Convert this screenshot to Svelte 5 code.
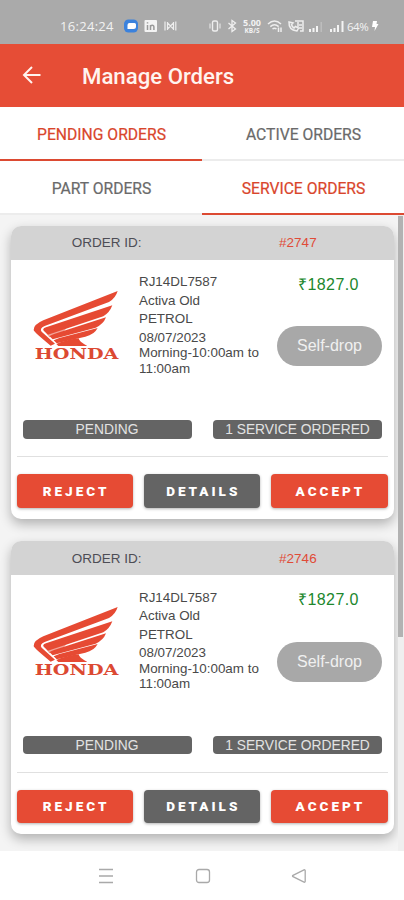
<script>
  let mainTab = $state('PENDING ORDERS');
  let subTab = $state('SERVICE ORDERS');

  const mainTabs = ['PENDING ORDERS', 'ACTIVE ORDERS'];
  const subTabs = ['PART ORDERS', 'SERVICE ORDERS'];

  const orders = [
    {
      id: 2747,
      details: ['RJ14DL7587', 'Activa Old', 'PETROL'],
      date: '08/07/2023',
      slot: 'Morning-10:00am to 11:00am',
      price: '₹1827.0',
      pickup: 'Self-drop',
      status: 'PENDING',
      services: '1 SERVICE ORDERED'
    },
    {
      id: 2746,
      details: ['RJ14DL7587', 'Activa Old', 'PETROL'],
      date: '08/07/2023',
      slot: 'Morning-10:00am to 11:00am',
      price: '₹1827.0',
      pickup: 'Self-drop',
      status: 'PENDING',
      services: '1 SERVICE ORDERED'
    }
  ];
</script>

{#snippet tabs(items, active, onSelect)}
  <div class="tabs">
    {#each items as item}
      <button class="tab" class:active={item === active} onclick={() => onSelect(item)}>{item}</button>
    {/each}
  </div>
{/snippet}

<div class="phone">
  <div class="status-bar">
    <span class="clock">16:24:24</span>
    <svg class="app-icons" width="54" height="16" viewBox="0 0 54 16">
      <rect x="0" y="1.5" width="14" height="13" rx="4.5" fill="#3b82dd" />
      <path d="M5.500 5h5a1.500 1.500 0 0 1 1.500 1.500V8.500a2.500 2.500 0 0 1-2.500 2.500H3.500V7a2 2 0 0 1 2-2z" fill="#fff" />
      <rect x="20.500" y="2" width="12.500" height="12" rx="1" fill="#f3f3f3" />
      <path d="M23.500 7v5M23.500 4.200v1.300M26.500 12V7M26.500 9q0-1.700 1.700-1.700T29.900 9v3" stroke="#999" stroke-width="1.500" fill="none" />
      <path d="M41 3.500v9M43.500 4v8M43.500 5l3 3 3-3M43.500 11l3-3 3 3M49.500 4v8M51.800 3.500v9" stroke="#eee" stroke-width="1.200" fill="none" />
    </svg>

    <!-- vibrate, bluetooth -->
    <svg class="signals" width="30" height="16" viewBox="0 0 30 16">
      <rect x="3.500" y="3" width="5" height="10" rx="1.500" fill="none" stroke="#eee" stroke-width="1.400" />
      <path d="M1 5.500v5M11 5.500v5" stroke="#eee" />
      <path d="M19.500 5l7 6-3.500 2.500v-11L26.500 5l-7 6" stroke="#eee" stroke-width="1.300" fill="none" />
    </svg>
    <span class="speed"><b>5.00</b><small>KB/S</small></span>

    <!-- wifi, volte, two sims -->
    <svg class="network" width="80" height="16" viewBox="0 0 80 16">
      <g fill="none" stroke="#eee" stroke-width="1.500">
        <path d="M1 6Q7.500 0 14 6M3.300 8.600Q7.500 5 11.700 8.600M5.500 11Q7.500 9.500 9.500 11" />
        <path d="M11.500 9.500v4.500M14 14V9.500" />
        <path d="M22 4q-.5 8 8 9l1.500-3-3-1.500-1.500 1.500q-2-1-2.500-3.500L26 5z" />
        <path d="M28 3h8v10h-3M31 4v5M35 7h-3M35 10h-3" />
      </g>
      <path d="M42 11h2v3h-2zM45.500 10h2v4h-2zM49 8h2v6h-2zM63 11h2v3h-2zM66.500 10h2v4h-2zM70 7h2v7h-2zM74.500 3h2v11h-2z" fill="#f4f4f4" />
      <path d="M53.500 4h1.500v10h-1.500z" fill="#bdbdbd" />
    </svg>
    <span class="battery">64%</span>
    <svg class="bolt" width="8" height="12" viewBox="0 0 8 12">
      <path d="M2 1h4l-.5 3H7.500L3.500 11l.500-4H1z" fill="#fff" />
    </svg>
  </div>

  <header>
    <button class="back" aria-label="Back">
      <svg width="20" height="20" viewBox="0 0 20 20">
        <path d="M18.500 10H2.500M10 2L2 10l8 8" fill="none" stroke="#fff3ee" stroke-width="2" />
      </svg>
    </button>
    <h1>Manage Orders</h1>
  </header>

  {@render tabs(mainTabs, mainTab, (t) => (mainTab = t))}
  {@render tabs(subTabs, subTab, (t) => (subTab = t))}

  <main>
    <div class="list">
      {#each orders as order (order.id)}
        <article class="card">
          <div class="card-head">
            <span>ORDER ID:</span>
            <span class="order-id">#{order.id}</span>
          </div>

          <div class="card-body">
            <svg class="logo" width="104" height="90" viewBox="0 0 312 270">
              <g fill="#e64a33">
                <path d="M281 33L58 121Q28 134 29 150Q30 156 80 197L93 191L53 155Q45 146 62 138L255 66Q275 54 281 33z" />
                <path d="M265 76L66 142Q53 147 60 153L72 164L238 109Q257 98 265 76z" />
                <path d="M246 112L90 162L76 168L86 178L215 143Q238 133 246 112z" />
                <path d="M221 144L106 174L89 181L98 190L184 170Q211 164 221 144z" />
                <path d="M97 192Q118 181 164 175Q164 184 190 198H103z" />
                <path d="M60 150L140 128L120 154L76 172z" opacity="0.5" />
              </g>
              <text x="32" y="236" textLength="251" lengthAdjust="spacingAndGlyphs">HONDA</text>
            </svg>

            <div class="info">
              {#each order.details as line}
                <p>{line}</p>
              {/each}
              <p class="when">{order.date}<br />{order.slot}</p>
            </div>

            <div class="side">
              <div class="price">{order.price}</div>
              <div class="pickup">{order.pickup}</div>
            </div>
          </div>

          <div class="badges">
            <span>{order.status}</span>
            <span>{order.services}</span>
          </div>

          <div class="actions">
            <button>REJECT</button>
            <button class="dark">DETAILS</button>
            <button>ACCEPT</button>
          </div>
        </article>
      {/each}
    </div>
    <div class="scrollbar"><div class="thumb"></div></div>
  </main>

  <nav>
    <svg width="16" height="16" viewBox="0 0 16 16"><path d="M1 1.500h14M1 8h14M1 14.500h14" /></svg>
    <svg width="16" height="16" viewBox="0 0 16 16"><rect x="1.500" y="1.500" width="13" height="13" rx="2.500" /></svg>
    <svg width="16" height="16" viewBox="0 0 16 16"><path d="M13 1.800L2 7.300q-1 .7 0 1.400l11 5.500q1.200.3 1.200-1V2.800q0-1.300-1.200-1z" /></svg>
  </nav>
</div>

<style>
  :global(body) {
    margin: 0;
    background: #fff;
  }

  .phone {
    width: 404px;
    height: 900px;
    display: flex;
    flex-direction: column;
    overflow: hidden;
    font-family: "Liberation Sans", Arial, sans-serif;
    background: #fff;
  }

  button {
    border: none;
    padding: 0;
    cursor: pointer;
    font-family: Roboto, sans-serif;
  }

  .status-bar {
    flex: none;
    height: 43.5px;
    box-sizing: border-box;
    padding: 9px 0 0 60px;
    display: flex;
    align-items: center;
    background: #aaa;
    color: #f2f2f2;
    font-family: "Open Sans", sans-serif;
  }

  .clock {
    width: 64px;
    font-size: 13px;
    letter-spacing: 0.3px;
  }

  .signals {
    margin-left: 31px;
  }

  .speed {
    width: 22px;
    margin-left: 2px;
    display: flex;
    flex-direction: column;
    align-items: center;
    font-size: 9px;
    line-height: 9px;
  }

  .speed small {
    font-size: 6.5px;
    font-weight: 700;
    line-height: 7px;
  }

  .network {
    margin-left: 4px;
  }

  .battery {
    width: 24px;
    font-size: 11.5px;
    letter-spacing: -0.5px;
  }

  header {
    flex: none;
    height: 63px;
    display: flex;
    align-items: center;
    background: #e64d36;
  }

  .back {
    margin-left: 22px;
    width: 60px;
    height: 20px;
    background: none;
    text-align: left;
  }

  .back svg {
    display: block;
  }

  h1 {
    margin: 2px 0 0;
    font-family: Roboto, sans-serif;
    font-size: 22.2px;
    font-weight: 500;
    color: #fff4ef;
  }

  .tabs {
    flex: none;
    height: 54.3px;
    display: flex;
  }

  .tab {
    flex: 1;
    padding: 3px 0 0 1px;
    background: #fff;
    border-bottom: 2px solid #ececec;
    color: #6a6a6a;
    font-size: 15.7px;
    font-weight: 400;
    -webkit-text-stroke: 0.2px;
  }

  .tab.active {
    color: #d9452b;
    border-bottom-color: #dc4a32;
  }

  main {
    flex: 1;
    min-height: 0;
    display: flex;
    background: #f4f4f4;
    overflow: hidden;
  }

  .list {
    flex: 1;
    padding: 10.5px 4.5px 0 11px;
    overflow: hidden;
  }

  .card {
    height: 293px;
    margin-bottom: 22.5px;
    border-radius: 10px;
    background: #fff;
    box-shadow: 0 5px 12px rgba(0, 0, 0, 0.28);
    overflow: hidden;
  }

  .card-head {
    height: 34px;
    display: flex;
    align-items: center;
    background: #d3d3d3;
    color: #4d4d55;
    font-size: 13.5px;
  }

  .card-head span {
    flex: 1;
    text-align: center;
  }

  .card-head .order-id {
    color: #e04b37;
  }

  .card-body {
    height: 160.5px;
    display: flex;
    align-items: flex-start;
  }

  .logo {
    flex: none;
    margin: 20.5px 0 0 13px;
  }

  .logo text {
    font-family: "DejaVu Serif", serif;
    font-size: 44px;
    font-weight: 700;
    fill: #dc4932;
  }

  .info {
    width: 132px;
    margin: 13.5px 0 0 11px;
    color: #494949;
    font-size: 13.4px;
  }

  .info p {
    margin: 0;
    line-height: 18.5px;
  }

  .info .when {
    padding-top: 1px;
    line-height: 15.5px;
  }

  .side {
    flex: 1;
    padding: 15px 11.5px 0 6px;
    text-align: center;
  }

  .price {
    height: 20px;
    margin-right: 2px;
    line-height: 20px;
    color: #20872c;
    font-size: 16px;
    letter-spacing: 0.4px;
  }

  .pickup {
    width: 105px;
    height: 40px;
    margin-top: 31.5px;
    border-radius: 20px;
    line-height: 40px;
    background: #a8a8a8;
    color: #f0f0f0;
    font-size: 16px;
  }

  .badges {
    height: 36px;
    margin: 0 6px;
    padding: 0 5.5px;
    display: flex;
    justify-content: space-between;
    border-bottom: 1px solid #e0e0e0;
  }

  .badges span {
    width: 169px;
    height: 18.5px;
    border-radius: 4px;
    line-height: 19px;
    background: #646464;
    color: #e2e2e2;
    font-size: 13.8px;
    text-align: center;
  }

  .actions {
    padding: 17px 6px 0;
    display: flex;
    gap: 11px;
  }

  .actions button {
    flex: 1;
    height: 33.5px;
    border-radius: 4px;
    background: #e64b34;
    box-shadow: 0 1px 3px rgba(0, 0, 0, 0.3);
    color: #fff;
    font-size: 13.5px;
    font-weight: 900;
    letter-spacing: 3px;
    text-indent: 2px;
  }

  .actions .dark {
    background: #646464;
  }

  .scrollbar {
    width: 6px;
    background: #efefef;
  }

  .thumb {
    width: 5px;
    height: 421px;
    margin-top: 1px;
    background: #b2b2b2;
  }

  nav {
    flex: none;
    height: 49px;
    padding: 0 97px 0 98px;
    display: flex;
    align-items: center;
    justify-content: space-between;
    background: #fff;
  }

  nav svg {
    fill: none;
    stroke: #a9a9a9;
    stroke-width: 1.3;
  }
</style>
